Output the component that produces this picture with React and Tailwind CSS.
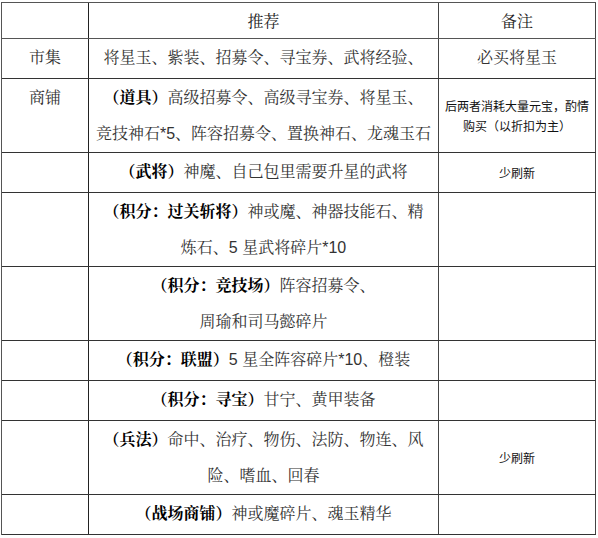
import React from "react";

const serif = { fontFamily: '"Noto Serif CJK SC", "Noto Sans CJK SC", serif' };

function B({ children }) {
  return <span className="font-bold text-black">{children}</span>;
}
function N({ children }) {
  return <span className="font-['Liberation_Sans',sans-serif]">{children}</span>;
}

function Row({ h, left, mid, note, noteCenter = true }) {
  return (
    <div className={`flex border-b border-[#333] ${h}`}>
      <div className="w-[87px] shrink-0 border-r border-[#222] text-center text-[16px] leading-[36px] text-[#333]">
        {left}
      </div>
      <div className="w-[350px] shrink-0 border-r border-[#444] text-center text-[16px] leading-[36px] text-[#333] whitespace-nowrap">
        {mid}
      </div>
      <div
        className={`w-[157px] shrink-0 border-r border-[#444] flex justify-center text-center ${
          noteCenter ? "items-center" : ""
        }`}
      >
        {note}
      </div>
    </div>
  );
}

const small = "text-[12px] leading-[20px] text-[#111] font-['Noto_Sans_CJK_SC',sans-serif]";

export default function App() {
  return (
    <div className="w-[598px] h-[538px] bg-white" style={serif}>
      <div className="ml-[1px] pt-[2px]">
        <div className="w-[595px] border-t border-l border-[#555]">
          <div className="flex h-[36px] border-b border-[#555]">
            <div className="w-[87px] shrink-0 border-r border-[#222]" />
            <div className="w-[350px] shrink-0 border-r border-[#444] flex items-center justify-center text-[16px] text-[#222]">
              推荐
            </div>
            <div className="w-[157px] shrink-0 border-r border-[#444] flex items-center justify-center text-[16px] text-[#222]">
              备注
            </div>
          </div>
          <Row
            h="h-[40px]"
            left="市集"
            mid="将星玉、紫装、招募令、寻宝券、武将经验、"
            noteCenter={false}
            note={<span className="text-[16px] leading-[36px] text-[#333]">必买将星玉</span>}
          />
          <Row
            h="h-[74px]"
            left="商铺"
            mid={
              <>
                <B>（道具）</B>高级招募令、高级寻宝券、将星玉、
                <br />
                竞技神石<N>*5</N>、阵容招募令、置换神石、龙魂玉石
              </>
            }
            note={
              <span className={small}>
                后两者消耗大量元宝，酌情
                <br />
                购买（以折扣为主）
              </span>
            }
          />
          <Row
            h="h-[40px]"
            mid={
              <>
                <B>（武将）</B>神魔、自己包里需要升星的武将
              </>
            }
            note={<span className={small}>少刷新</span>}
          />
          <Row
            h="h-[74px]"
            mid={
              <>
                <B>（积分：过关斩将）</B>神或魔、神器技能石、精
                <br />
                炼石、<N>5 </N>星武将碎片<N>*10</N>
              </>
            }
          />
          <Row
            h="h-[74px]"
            mid={
              <>
                <B>（积分：竞技场）</B>阵容招募令、
                <br />
                周瑜和司马懿碎片
              </>
            }
          />
          <Row
            h="h-[40px]"
            mid={
              <>
                <B>（积分：联盟）</B>
                <N>5 </N>星全阵容碎片<N>*10</N>、橙装
              </>
            }
          />
          <Row
            h="h-[40px]"
            mid={
              <>
                <B>（积分：寻宝）</B>甘宁、黄甲装备
              </>
            }
          />
          <Row
            h="h-[74px]"
            mid={
              <>
                <B>（兵法）</B>命中、治疗、物伤、法防、物连、风
                <br />
                险、嗜血、回春
              </>
            }
            note={<span className={small}>少刷新</span>}
          />
          <Row
            h="h-[40px]"
            mid={
              <>
                <B>（战场商铺）</B>神或魔碎片、魂玉精华
              </>
            }
          />
        </div>
      </div>
    </div>
  );
}
